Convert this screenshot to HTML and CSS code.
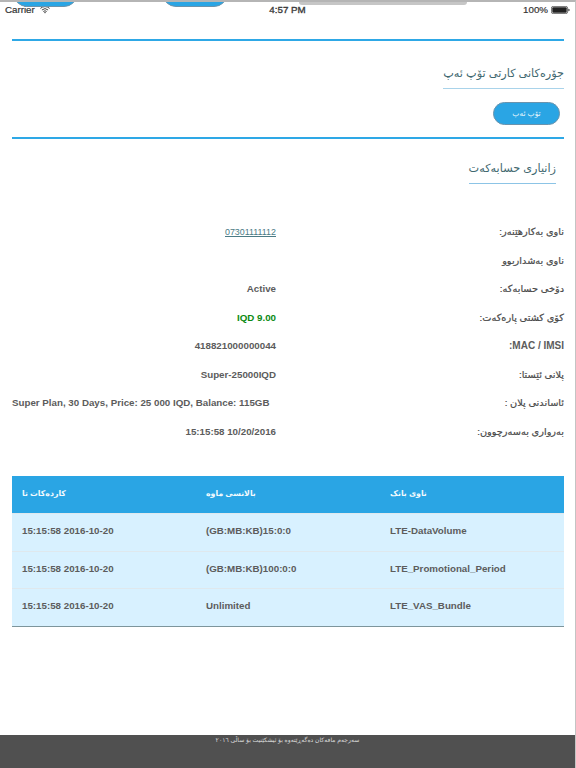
FILE: index.html
```html
<!DOCTYPE html>
<html lang="ckb">
<head>
<meta charset="utf-8">
<title>Top up</title>
<link rel="stylesheet" href="styles.css">
</head>
<body>
<div class="overlay-top">
  <span class="peek peek-a"></span>
  <span class="peek peek-b"></span>
  <span class="scroll-thumb"></span>
</div>
<header class="status">
  <div class="status-left">Carrier
    <svg class="wifi" viewBox="0 0 12 9" width="10" height="8"><path d="M0.5 2.6 A8 8 0 0 1 11.5 2.6 M2.3 4.5 A5.4 5.4 0 0 1 9.7 4.5 M4 6.3 A3 3 0 0 1 8 6.3" fill="none" stroke="#333" stroke-width="1.1"/><path d="M6 8.6 L4.9 7.3 A1.6 1.6 0 0 1 7.1 7.3 Z" fill="#333"/></svg>
  </div>
  <div class="status-time">4:57 PM</div>
  <div class="status-right">100%
    <svg class="battery" viewBox="0 0 19 8" width="19" height="8"><rect x="0.4" y="0.4" width="16.2" height="7.2" rx="1.8" fill="none" stroke="#333" stroke-width="0.7"/><rect x="1.3" y="1.3" width="14.4" height="5.4" rx="1" fill="#222"/><path d="M17.4 2.7 C18.4 2.9 18.6 3.3 18.6 4 C18.6 4.7 18.4 5.1 17.4 5.3 Z" fill="#333"/></svg>
  </div>
</header>
<main class="page">
  <hr class="rule">
  <section class="topup" dir="rtl">
    <h2 class="heading heading-a">جۆرەکانی کارتی تۆپ ئەپ</h2>
    <button class="pill" type="button">تۆپ ئەپ</button>
  </section>
  <hr class="rule">
  <section dir="rtl" class="account-head">
    <h2 class="heading heading-b">زانیاری حسابەکەت</h2>
  </section>
  <dl class="info">
    <div class="row"><dd class="val"><a href="#">07301111112</a></dd><dt class="lab">ناوی بەکارهێنەر:</dt></div>
    <div class="row"><dd class="val"></dd><dt class="lab">ناوی بەشداربوو</dt></div>
    <div class="row"><dd class="val">Active</dd><dt class="lab">دۆخی حسابەکە:</dt></div>
    <div class="row"><dd class="val green">IQD 9.00</dd><dt class="lab">کۆی کشتی پارەکەت:</dt></div>
    <div class="row"><dd class="val">418821000000044</dd><dt class="lab latin">MAC / IMSI:</dt></div>
    <div class="row"><dd class="val">Super-25000IQD</dd><dt class="lab">پلانی ئێستا:</dt></div>
    <div class="row"><dd class="val plan">Super Plan, 30 Days, Price: 25 000 IQD, Balance: 115GB</dd><dt class="lab">ئاساندنی پلان :</dt></div>
    <div class="row"><dd class="val">15:15:58 10/20/2016</dd><dt class="lab">بەرواری بەسەرچوون:</dt></div>
  </dl>
  <table class="bundles">
    <thead>
      <tr><th>کاردەکات تا</th><th>بالانسی ماوە</th><th>ناوی بانک</th></tr>
    </thead>
    <tbody>
      <tr><td>15:15:58 2016-10-20</td><td>(GB:MB:KB)15:0:0</td><td>LTE-DataVolume</td></tr>
      <tr><td>15:15:58 2016-10-20</td><td>(GB:MB:KB)100:0:0</td><td>LTE_Promotional_Period</td></tr>
      <tr><td>15:15:58 2016-10-20</td><td>Unlimited</td><td>LTE_VAS_Bundle</td></tr>
    </tbody>
  </table>
</main>
<footer class="foot" dir="rtl">سەرجەم مافەکان دەگەڕێتەوە بۆ ئیشکێنیت بۆ ساڵی ٢٠١٦</footer>
</body>
</html>
```
FILE: styles.css
```css
* { box-sizing: border-box; }
html, body { margin: 0; height: 100%; }
body {
  position: relative;
  width: 576px;
  height: 768px;
  overflow: hidden;
  background: #fff;
  font-family: "Liberation Sans", "DejaVu Sans", sans-serif;
  color: #5c5c5c;
  display: flex;
  flex-direction: column;
  border-top: 2px solid #b5b5b5;
  border-right: 1px solid #c4c4c4;
}
.overlay-top { position: absolute; top: 0; left: 0; width: 100%; height: 8px; overflow: hidden; }
.peek { position: absolute; top: -17px; height: 22px; background: #2aa5e4; border: 1px solid #6a93ad; border-radius: 0 0 14px 14px; }
.peek-a { left: 13px; width: 65px; }
.peek-b { left: 162px; width: 66px; }
.scroll-thumb { position: absolute; top: -1px; left: 299px; width: 168px; height: 4px; background: #c6c6c6; border-radius: 0 0 3px 3px; }

.status {
  height: 15px;
  display: grid;
  grid-template-columns: 1fr auto 1fr;
  align-items: center;
  padding: 0 5px;
  font-size: 9.75px;
  color: #333;
  font-weight: 400;
  -webkit-text-stroke: 0.2px #333;
}
.status-time { font-weight: 400; -webkit-text-stroke: 0.35px #3a3a3a; color: #3a3a3a; }
.status-left { display: flex; align-items: center; gap: 5px; }
.status-right { display: flex; align-items: center; justify-content: flex-end; gap: 3px; }

.page { flex: 1; padding: 22px 11px 0 12px; }
.rule { margin: 0; border: 0; height: 2px; background: #2ea8e6; }

.topup { height: 96px; padding-top: 19px; }
.heading {
  margin: 0;
  display: table;
  font-size: 11.25px;
  line-height: 26px;
  font-weight: 400;
  color: #3f6870;
  border-bottom: 1px solid #a9d3ea;
  padding-bottom: 2px;
}
.pill {
  display: block;
  margin: 13px 4px 0 0;
  width: 67px;
  height: 22.5px;
  background: #2aa5e4;
  border: 1px solid #6a93ad;
  border-radius: 12px;
  color: #e8f5fc;
  font: 7.5px "Liberation Sans", "DejaVu Sans", sans-serif;
  padding: 0;
}
.account-head { height: 78.5px; padding: 16px 8px 0 0; }
.heading-b { border-bottom-color: #8cc4e6; }

.info { margin: 0; }
.row {
  display: grid;
  grid-template-columns: 264px 1fr;
  align-items: center;
  height: 28.5px;
  font-size: 9.75px;
  font-weight: 700;
}
.val { margin: 0; text-align: right; white-space: nowrap; }
.val a { color: #4b7b85; font-weight: 400; text-decoration: underline; font-size: 8.9px; }
.green { color: #0b8a12; }
.plan { padding-right: 8px; }
.lab { text-align: right; font-weight: 400; direction: rtl; color: #4a4a4a; -webkit-text-stroke: 0.2px #4a4a4a; }
.latin { font-weight: 700; font-size: 10px; color: #5c5c5c; -webkit-text-stroke: 0; }

.bundles {
  margin-top: 30.5px;
  width: 100%;
  table-layout: fixed;
  border-collapse: collapse;
  font-size: 9.75px;
  font-weight: 700;
  text-align: left;
  border-bottom: 1px solid #7d959c;
}
.bundles th {
  height: 37.5px;
  padding: 0 10px 2px;
  background: #2aa5e4;
  color: #f2fafe;
  font-weight: 700;
  font-size: 7.8px;
}
.bundles td {
  height: 37.5px;
  padding: 0 10px 3px;
  background: #d8f1ff;
  border-top: 1px solid #dfe8ed;
}
.foot {
  height: 33px;
  background: #505050;
  color: #dcdcdc;
  text-align: center;
  font-size: 6.1px;
  line-height: 10px;
}
```
